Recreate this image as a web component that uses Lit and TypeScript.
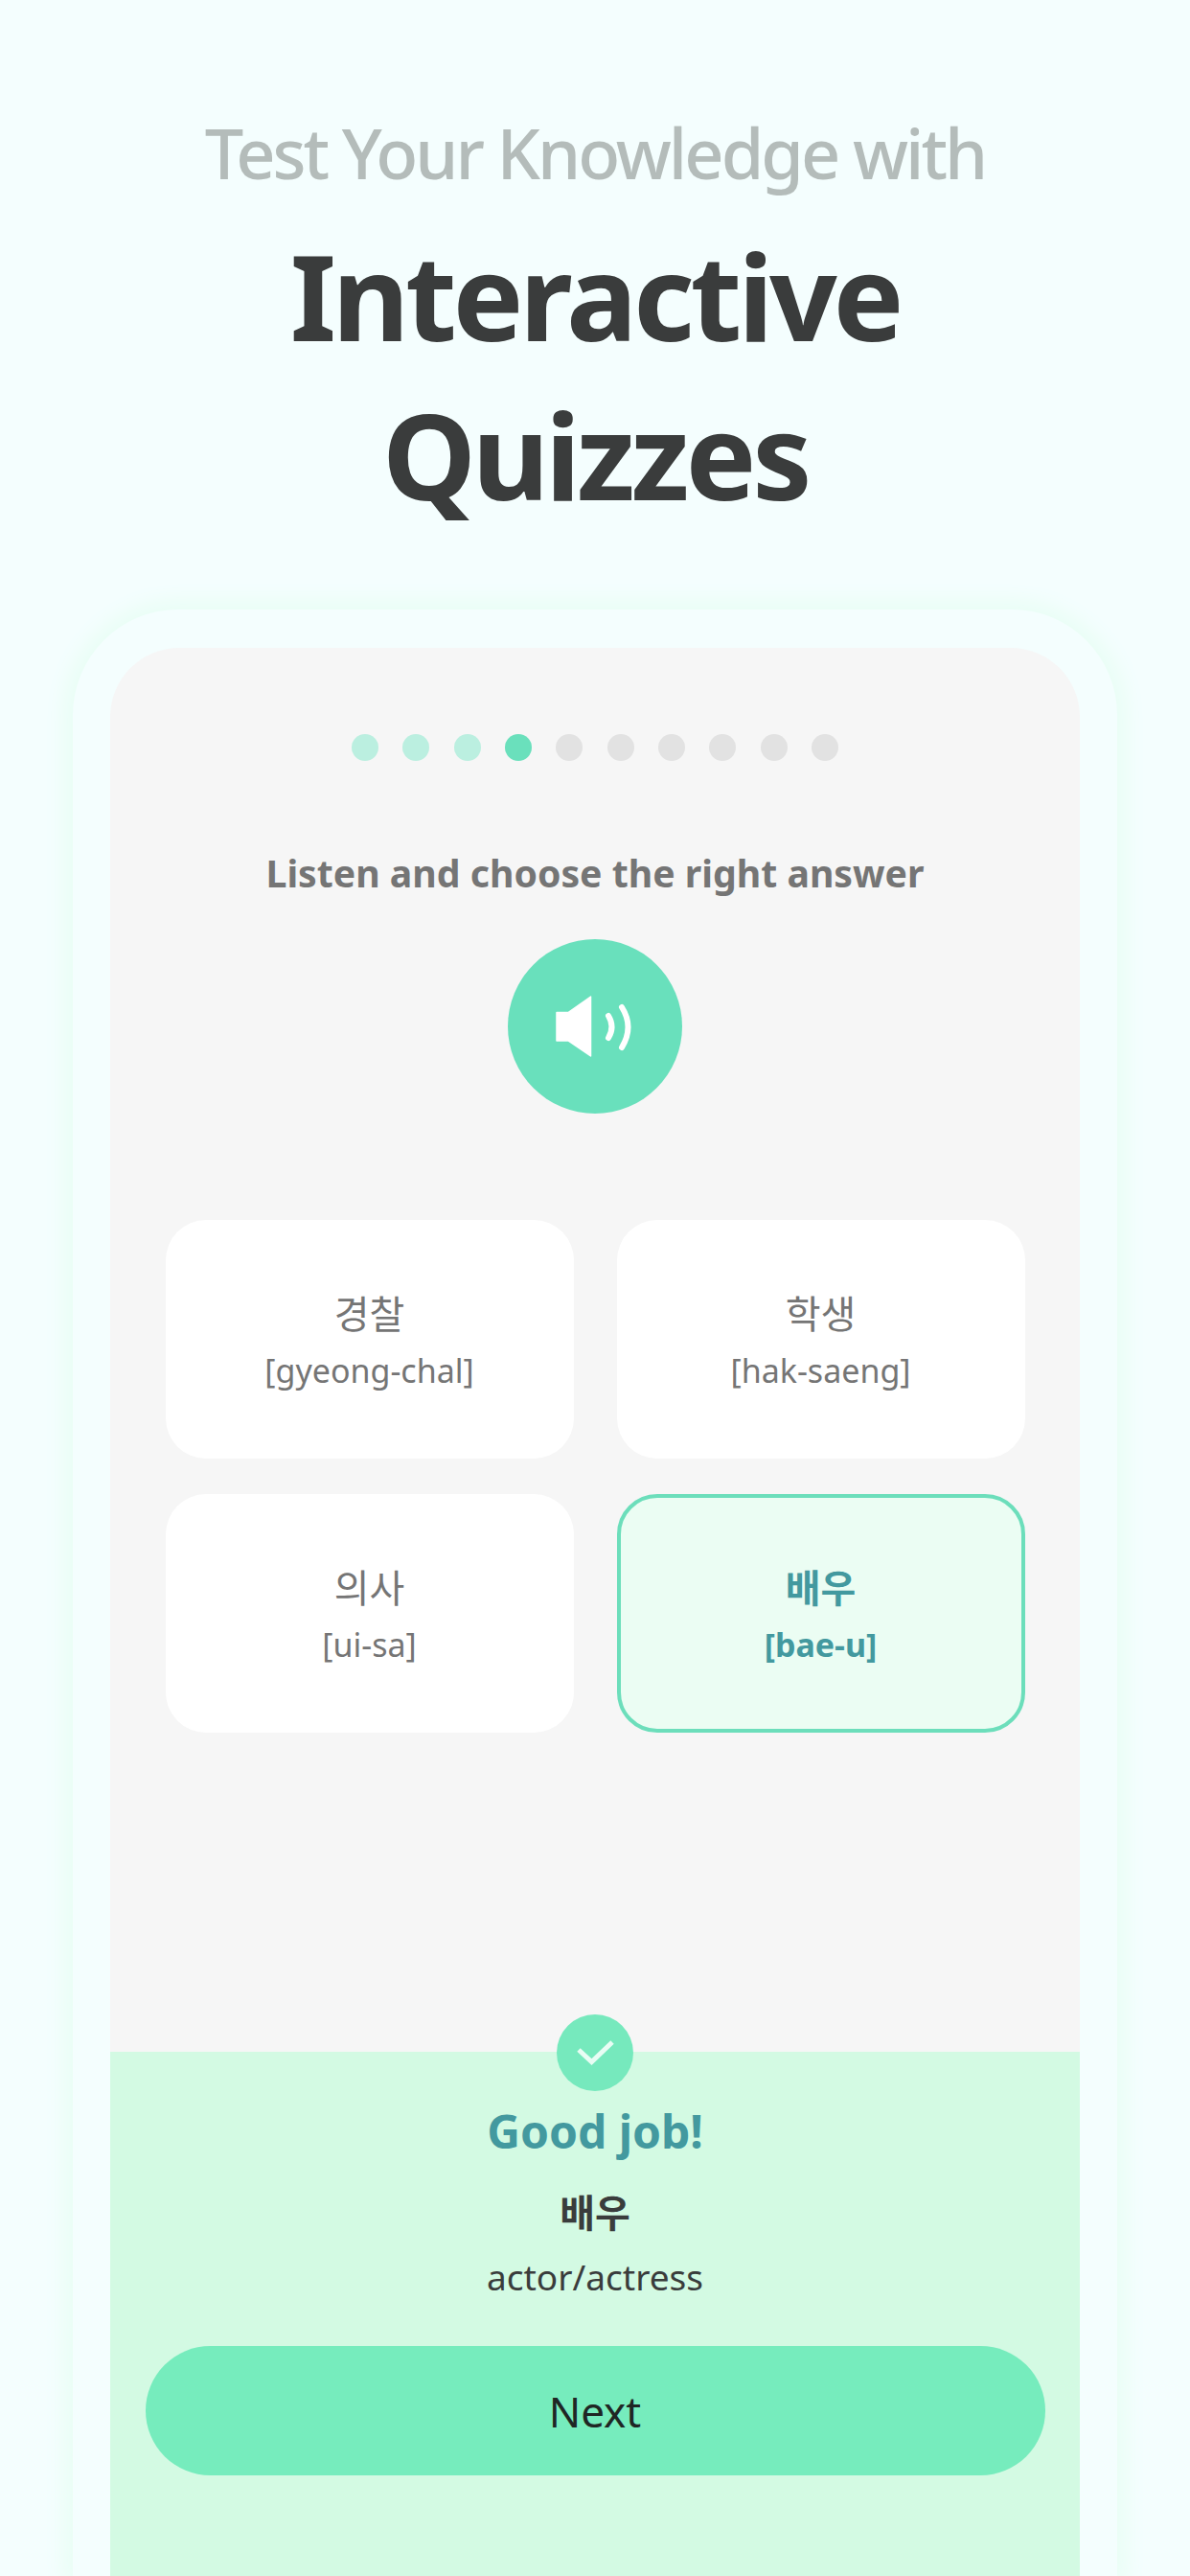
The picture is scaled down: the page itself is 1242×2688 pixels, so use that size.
import { LitElement, html, css } from 'lit';
import { customElement, state } from 'lit/decorators.js';
import { classMap } from 'lit/directives/class-map.js';

interface Choice {
  word: string;
  roman: string;
}

const CHOICES: Choice[] = [
  { word: '경찰', roman: '[gyeong-chal]' },
  { word: '학생', roman: '[hak-saeng]' },
  { word: '의사', roman: '[ui-sa]' },
  { word: '배우', roman: '[bae-u]' },
];

const TOTAL_STEPS = 10;

@customElement('app-root')
export class AppRoot extends LitElement {
  @state() private _step = 3;
  @state() private _selected = 3;

  static styles = css`
    :host {
      display: flex;
      flex-direction: column;
      align-items: center;
      width: 1242px;
      height: 2688px;
      overflow: hidden;
      background: #f4fefe;
      font-family: 'Noto Sans', 'Noto Sans CJK KR', sans-serif;
    }
    .head {
      display: flex;
      flex-direction: column;
      align-items: center;
      padding-top: 109px;
      margin-bottom: 79px;
    }
    .eyebrow {
      font-size: 72px;
      line-height: 100px;
      font-weight: 500;
      letter-spacing: -3px;
      color: #b4bcba;
    }
    .title {
      margin: 16px 0 0;
      width: 800px;
      text-align: center;
      font-size: 124px;
      line-height: 166px;
      font-weight: 700;
      letter-spacing: -4.3px;
      color: #3a3c3c;
    }
    .bezel {
      flex: 1;
      box-sizing: border-box;
      width: 1090px;
      padding: 40px 39px 0;
      border-radius: 110px 110px 0 0;
      background: #f4fefe;
      box-shadow: 0 0 22px 8px #e8fef4;
    }
    .screen {
      display: flex;
      flex-direction: column;
      align-items: center;
      height: 100%;
      border-radius: 72px 72px 0 0;
      background: #f6f6f6;
    }
    .dots {
      display: flex;
      gap: 25.3px;
      margin-top: 90px;
    }
    .dot {
      width: 28px;
      height: 28px;
      border-radius: 50%;
      background: #e2e2e2;
    }
    .dot.done {
      background: #bbefe0;
    }
    .dot.current {
      background: #6ae0bc;
    }
    .prompt {
      margin-top: 89px;
      font-size: 39.2px;
      line-height: 56px;
      font-weight: 700;
      color: #757575;
    }
    .play {
      display: flex;
      align-items: center;
      justify-content: center;
      width: 182px;
      height: 182px;
      margin-top: 41px;
      border-radius: 50%;
      background: #69e0bc;
    }
    .choices {
      display: grid;
      grid-template-columns: 426px 426px;
      grid-auto-rows: 249px;
      column-gap: 45px;
      row-gap: 37px;
      margin-top: 111px;
    }
    .choice {
      display: flex;
      flex-direction: column;
      align-items: center;
      justify-content: center;
      box-sizing: border-box;
      border-radius: 42px;
      background: #ffffff;
      color: #757575;
    }
    .choice.selected {
      border: 4.5px solid #6cdebb;
      background: #ebfdf3;
      color: #43999f;
      font-weight: 700;
    }
    .word {
      font-size: 40px;
      line-height: 56px;
    }
    .roman {
      margin-top: 8px;
      font-size: 34px;
      line-height: 46px;
    }
    .feedback {
      position: relative;
      display: flex;
      flex: 1;
      flex-direction: column;
      align-items: center;
      align-self: stretch;
      margin-top: 333px;
      padding-top: 50px;
      background: #d3fae3;
    }
    .badge {
      position: absolute;
      top: -39px;
      left: 50%;
      display: flex;
      align-items: center;
      justify-content: center;
      width: 80px;
      height: 80px;
      margin-left: -40px;
      border-radius: 50%;
      background: #76e9bd;
    }
    .praise {
      font-size: 48px;
      line-height: 66px;
      font-weight: 700;
      color: #43999f;
    }
    .answer {
      margin-top: 24px;
      font-size: 40px;
      line-height: 56px;
      font-weight: 700;
      color: #3a3c3c;
    }
    .meaning {
      margin-top: 14px;
      font-size: 37px;
      line-height: 50px;
      color: #3a3c3c;
    }
    .next {
      width: 939px;
      height: 135px;
      margin-top: 47px;
      padding: 0;
      border: none;
      border-radius: 68px;
      background: #76ecbd;
      font: inherit;
      font-size: 44px;
      color: #1f2624;
    }
  `;

  private _dotClasses(index: number) {
    return {
      dot: true,
      done: index < this._step,
      current: index === this._step,
    };
  }

  render() {
    const answer = CHOICES[this._selected];
    return html`
      <header class="head">
        <div class="eyebrow">Test Your Knowledge with</div>
        <h1 class="title">Interactive Quizzes</h1>
      </header>
      <section class="bezel">
        <div class="screen">
          <div class="dots">
            ${Array.from(
              { length: TOTAL_STEPS },
              (_, i) => html`<span class=${classMap(this._dotClasses(i))}></span>`,
            )}
          </div>
          <div class="prompt">Listen and choose the right answer</div>
          <div class="play">
            <svg width="82" height="64" viewBox="0 0 82 64" fill="none">
              <path d="M1 17.5H13L36.5 1V63L13 47H1Z" fill="#fff" stroke="#fff" stroke-width="1.5" stroke-linejoin="round" />
              <path d="M55 21Q62 32.5 55 44" stroke="#fff" stroke-width="6" stroke-linecap="round" />
              <path d="M69 12Q82 32.5 69 54" stroke="#fff" stroke-width="6" stroke-linecap="round" />
            </svg>
          </div>
          <div class="choices">
            ${CHOICES.map(
              (c, i) => html`
                <div class=${classMap({ choice: true, selected: i === this._selected })}>
                  <span class="word">${c.word}</span>
                  <span class="roman">${c.roman}</span>
                </div>
              `,
            )}
          </div>
          <div class="feedback">
            <div class="badge">
              <svg width="40" height="28" viewBox="0 0 40 28" fill="none">
                <path d="M3 11L16.5 23.5L38 3" stroke="#e8fdf4" stroke-width="5" />
              </svg>
            </div>
            <div class="praise">Good job!</div>
            <div class="answer">${answer.word}</div>
            <div class="meaning">actor/actress</div>
            <button class="next">Next</button>
          </div>
        </div>
      </section>
    `;
  }
}
